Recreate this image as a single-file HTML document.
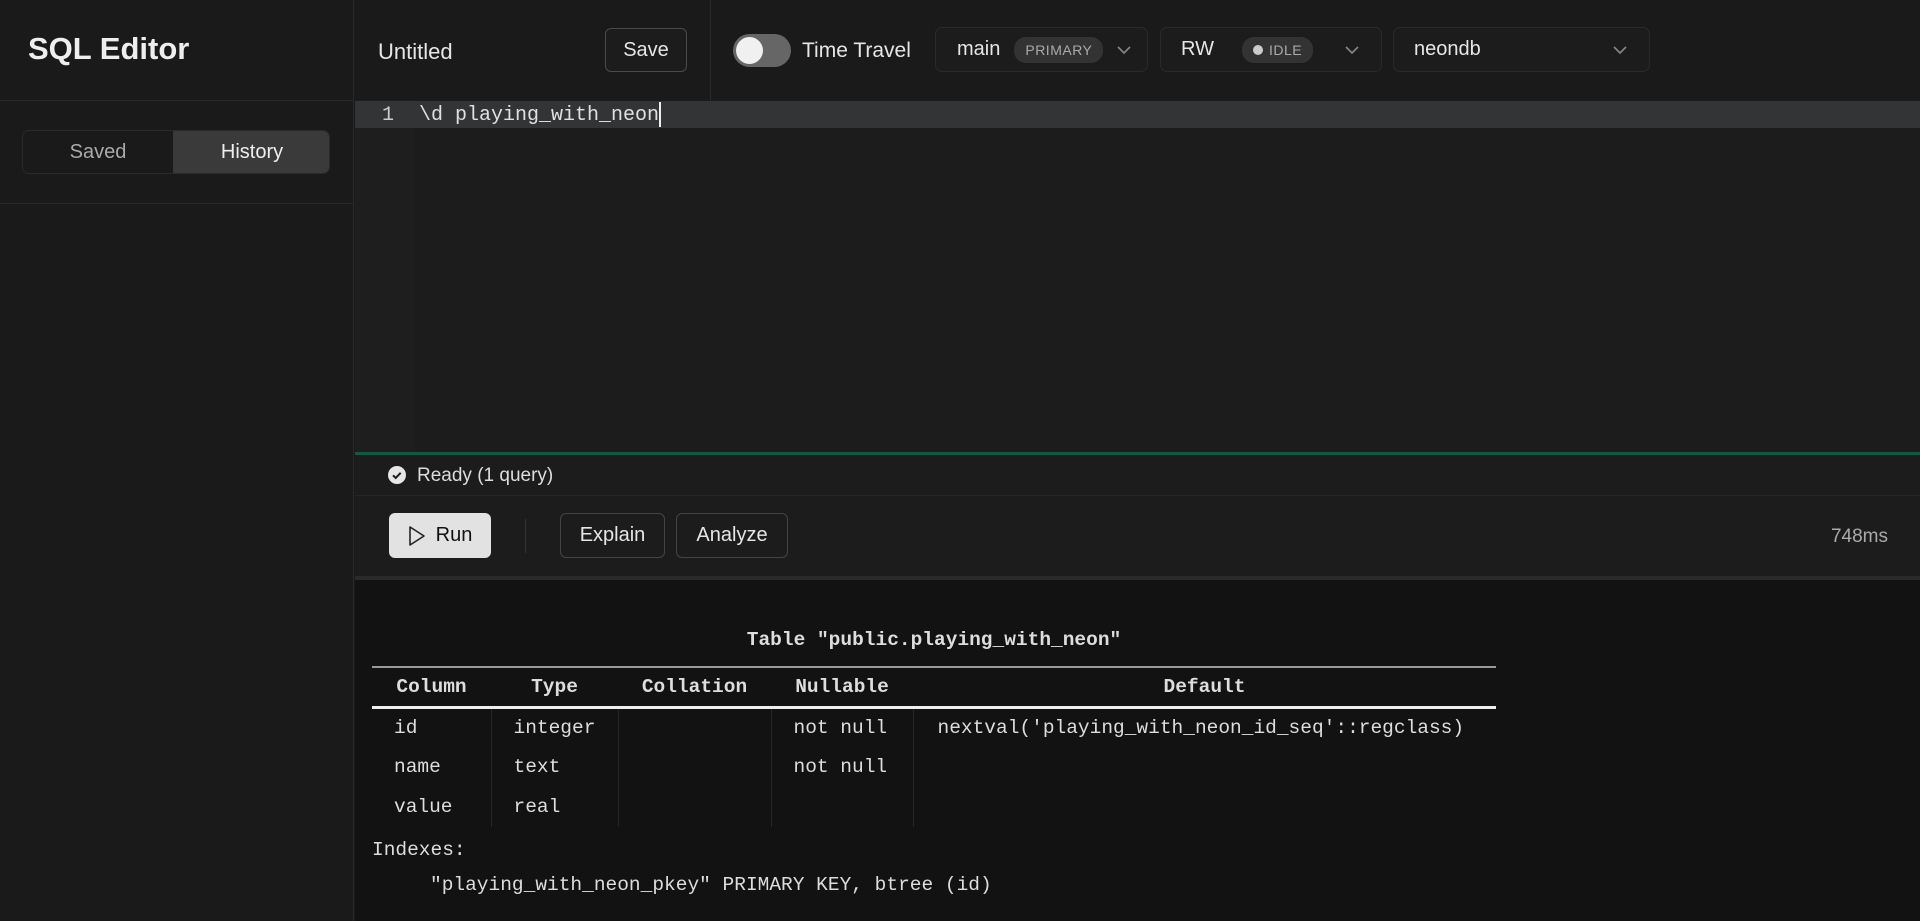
<!DOCTYPE html>
<html><head><meta charset="utf-8"><style>
*{box-sizing:border-box;margin:0;padding:0}
body{width:1920px;height:921px;background:#1a1a1a;font-family:"Liberation Sans",sans-serif;color:#e6e6e6;position:relative;overflow:hidden}
.a{position:absolute}
.mono{font-family:"Liberation Mono",monospace}
.dd{position:absolute;top:27px;height:45px;border:1px solid #2a2a2a;border-radius:7px;background:#1c1c1c;display:flex;align-items:center;font-size:20px;color:#e6e6e6}
.chev{position:absolute;right:16px;top:15px;width:14px;height:14px}
.btn{position:absolute;border:1px solid #444;border-radius:6px;display:flex;align-items:center;justify-content:center;font-size:20px;color:#e6e6e6;background:#1c1c1c}
.pill{background:#333;border-radius:12px;font-size:14px;color:#aaa;height:26px;display:flex;align-items:center;padding:0 11px;letter-spacing:.5px}
td,th{font-family:"Liberation Mono",monospace;font-size:19.5px;height:40px;color:#ddd;font-weight:normal;white-space:nowrap}
</style></head><body>
<div class="a" style="left:0;top:0;width:354px;height:921px;background:#1a1a1a;border-right:1px solid #2a2a2a"></div>
<div class="a" style="left:28px;top:31px;font-size:31px;font-weight:bold;color:#eee">SQL Editor</div>
<div class="a" style="left:0;top:100px;width:354px;border-top:1px solid #2a2a2a"></div>
<div class="a" style="left:22px;top:130px;width:308px;height:44px;border:1px solid #2a2a2a;border-radius:7px;background:#1a1a1a;overflow:hidden">
 <div class="a" style="left:0;top:0;width:150px;height:42px;display:flex;align-items:center;justify-content:center;font-size:20px;color:#aaa">Saved</div>
 <div class="a" style="left:150px;top:0;width:158px;height:42px;background:#3a3a3a;display:flex;align-items:center;justify-content:center;font-size:20px;color:#eee">History</div>
</div>
<div class="a" style="left:0;top:203px;width:354px;border-top:1px solid #2a2a2a"></div>
<div class="a" style="left:378px;top:39px;font-size:22px;color:#e6e6e6">Untitled</div>
<div class="btn" style="left:605px;top:28px;width:82px;height:44px;border-color:#4a4a4a">Save</div>
<div class="a" style="left:710px;top:0;height:100px;border-left:1px solid #2a2a2a"></div>
<div class="a" style="left:733px;top:34px;width:58px;height:33px;border-radius:17px;background:#666"></div>
<div class="a" style="left:736px;top:37px;width:27px;height:27px;border-radius:50%;background:#f0f0f0"></div>
<div class="a" style="left:802px;top:39px;font-size:21px">Time Travel</div>
<div class="dd" style="left:935px;width:213px"><span style="margin-left:21px">main</span><span class="pill" style="margin-left:14px">PRIMARY</span><svg class="chev" viewBox="0 0 14 14"><path d="M1 4l6 6 6-6" fill="none" stroke="#888" stroke-width="1.6"/></svg></div>
<div class="dd" style="left:1160px;width:222px"><span style="margin-left:20px">RW</span><span class="pill" style="margin-left:28px"><span style="width:10px;height:10px;border-radius:50%;background:#ccc;margin-right:6px"></span>IDLE</span><svg class="chev" style="right:22px" viewBox="0 0 14 14"><path d="M1 4l6 6 6-6" fill="none" stroke="#888" stroke-width="1.6"/></svg></div>
<div class="dd" style="left:1393px;width:257px"><span style="margin-left:20px">neondb</span><svg class="chev" style="right:22px" viewBox="0 0 14 14"><path d="M1 4l6 6 6-6" fill="none" stroke="#888" stroke-width="1.6"/></svg></div>
<div class="a" style="left:355px;top:100px;width:1565px;height:353px;background:#1c1c1c"></div>
<div class="a" style="left:355px;top:100px;width:60px;height:353px;background:#1e1e1e"></div>
<div class="a" style="left:355px;top:101px;width:1565px;height:27px;background:#333436"></div>
<div class="a mono" style="left:382px;top:104px;font-size:20px;color:#ccc">1</div>
<div class="a mono" style="left:419px;top:104px;font-size:20px;color:#e0e0e0">\d playing_with_neon</div>
<div class="a" style="left:659px;top:102px;width:2px;height:25px;background:#eee"></div>
<div class="a" style="left:355px;top:452px;width:1565px;height:3px;background:#0f5a3c"></div>
<div class="a" style="left:355px;top:455px;width:1565px;height:122px;background:#1c1c1c"></div>
<svg class="a" style="left:388px;top:466px" width="18" height="18" viewBox="0 0 18 18"><circle cx="9" cy="9" r="9" fill="#e6e6e6"/><path d="M5 9.3l2.7 2.7 5-5.2" fill="none" stroke="#1c1c1c" stroke-width="2"/></svg>
<div class="a" style="left:417px;top:465px;font-size:19px;color:#ddd">Ready (1 query)</div>
<div class="a" style="left:355px;top:495px;width:1565px;border-top:1px solid #262626"></div>
<div class="btn" style="left:389px;top:513px;width:102px;height:45px;background:#e2e2e2;border-color:#e2e2e2;color:#111"><svg width="18" height="22" viewBox="0 0 18 22" style="margin-right:10px"><path d="M2 2l14 9-14 9z" fill="none" stroke="#222" stroke-width="1.6" stroke-linejoin="round"/></svg>Run</div>
<div class="a" style="left:525px;top:519px;height:34px;border-left:1px solid #333"></div>
<div class="btn" style="left:560px;top:513px;width:105px;height:45px">Explain</div>
<div class="btn" style="left:676px;top:513px;width:112px;height:45px">Analyze</div>
<div class="a" style="right:32px;top:526px;font-size:19px;color:#aaa">748ms</div>
<div class="a" style="left:355px;top:576px;width:1565px;height:4px;background:#2a2a2a"></div>
<div class="a" style="left:355px;top:580px;width:1565px;height:341px;background:#121212"></div>
<div class="a mono" style="left:372px;top:629px;width:1124px;text-align:center;font-size:19.5px;font-weight:bold;color:#ddd">Table "public.playing_with_neon"</div>
<table class="a" style="left:372px;top:666px;width:1124px;border-collapse:collapse">
<tr style="border-top:2px solid #999;border-bottom:3px solid #eee"><th style="width:119px;font-weight:bold">Column</th><th style="width:127px;font-weight:bold">Type</th><th style="width:153px;font-weight:bold">Collation</th><th style="width:142px;font-weight:bold">Nullable</th><th style="font-weight:bold">Default</th></tr>
<tr><td style="padding-left:22px">id</td><td style="padding-left:22px;border-left:1px solid #262626">integer</td><td style="border-left:1px solid #262626"></td><td style="padding-left:22px;border-left:1px solid #262626">not null</td><td style="padding-left:24px;border-left:1px solid #262626">nextval('playing_with_neon_id_seq'::regclass)</td></tr>
<tr><td style="padding-left:22px">name</td><td style="padding-left:22px;border-left:1px solid #262626">text</td><td style="border-left:1px solid #262626"></td><td style="padding-left:22px;border-left:1px solid #262626">not null</td><td style="border-left:1px solid #262626"></td></tr>
<tr><td style="padding-left:22px">value</td><td style="padding-left:22px;border-left:1px solid #262626">real</td><td style="border-left:1px solid #262626"></td><td style="border-left:1px solid #262626"></td><td style="border-left:1px solid #262626"></td></tr>
</table>
<div class="a mono" style="left:372px;top:839px;font-size:19.5px;color:#ddd">Indexes:</div>
<div class="a mono" style="left:430px;top:874px;font-size:19.5px;color:#ddd">"playing_with_neon_pkey" PRIMARY KEY, btree (id)</div>
</body></html>
